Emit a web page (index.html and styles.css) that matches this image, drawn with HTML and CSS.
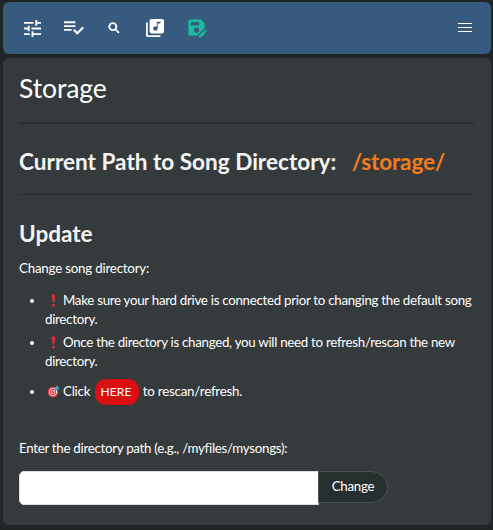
FILE: index.html
```html
<!DOCTYPE html>
<html lang="en">
<head>
<meta charset="utf-8">
<title>Storage</title>
<link rel="stylesheet" href="styles.css">
</head>
<body>
<nav class="bar">
  <svg class="icon tune" viewBox="3 3 18 18"><path d="M3 17v2h6v-2H3zM3 5v2h10V5H3zm10 16v-2h8v-2h-8v-2h-2v6h2zM7 9v2H3v2h4v2h2V9H7zm14 4v-2H11v2h10zm-6-4h2V7h4V5h-4V3h-2v6z"/></svg>
  <svg class="icon queue" viewBox="2 6 20 14"><path d="M14 10H2v2h12v-2zm0-4H2v2h12V6zM2 16h8v-2H2v2zm19.5-4.5L23 13l-6.990 7-4.510-4.500L13 14l3.010 3 5.490-5.500z"/></svg>
  <svg class="icon search" viewBox="0 0 12 12"><circle cx="4.8" cy="4.6" r="3.5"/><path d="M7.300 7.100 11 10.800"/></svg>
  <svg class="icon library" viewBox="2 2 20 20"><path d="M20 2H8c-1.100 0-2 .9-2 2v12c0 1.100.9 2 2 2h12c1.100 0 2-.9 2-2V4c0-1.100-.9-2-2-2zm-2 5h-3v5.500c0 1.380-1.120 2.500-2.500 2.500S10 13.880 10 12.500s1.120-2.500 2.500-2.500c.57 0 1.080.19 1.500.51V5h4v2zM4 6H2v14c0 1.100.9 2 2 2h14v-2H4V6z"/></svg>
  <svg class="icon save" viewBox="0 0 19 19"><path fill-rule="evenodd" d="M2 .5h10.800L16.500 4.200V9L9.300 16.500H2a1.700 1.700 0 0 1-1.700-1.700V2.200A1.700 1.700 0 0 1 2 .5zM2.800 3v3.400h8.400V3zM8.500 8.600a2.600 2.600 0 1 0 0 5.200 2.600 2.600 0 0 0 0-5.200z"/><path d="M11 18.500v-1.900l5-5 1.900 1.900-5 5zM16.600 11l.5-.5q.3-.3.600 0l1.200 1.200q.3.300 0 .6l-.5.500z"/></svg>
  <svg class="menu" viewBox="0 0 14 10"><path d="M0 .5h14M0 4.500h14M0 8.500h14"/></svg>
</nav>
<main class="panel">
  <h1>Storage</h1>
  <hr class="thick">
  <h2 class="current">Current Path to Song Directory: <span class="path">/storage/</span></h2>
  <hr>
  <h2 class="update">Update</h2>
  <p class="intro">Change song directory:</p>
  <ul>
    <li><svg class="emoji" viewBox="0 0 13 13"><path class="red" d="M4.700 1Q6.500-.6 8.300 1L7.300 8.800H5.700z"/><circle class="red" cx="6.500" cy="11.300" r="1.400"/></svg><span>Make sure your hard drive is connected prior to changing the default song directory.</span></li>
    <li><svg class="emoji" viewBox="0 0 13 13"><path class="red" d="M4.700 1Q6.500-.6 8.300 1L7.300 8.800H5.700z"/><circle class="red" cx="6.500" cy="11.300" r="1.400"/></svg><span>Once the directory is changed, you will need to refresh/rescan the new directory.</span></li>
    <li class="rescan"><svg class="emoji" viewBox="0 0 13 13"><circle class="red" cx="6" cy="7" r="5.500"/><circle cx="6" cy="7" r="3.700" fill="none" stroke="#eee"/><circle cx="6" cy="7" r="1.600" fill="none" stroke="#eee" stroke-width=".8"/><path d="M6 7 8.500 4.500" stroke="#42a9e0"/><path d="M7.500 5.500 8.500 2l2-1.700.4 1.900 1.900.4-1.700 2-2.600.9z" fill="#42a9e0"/></svg><span>Click</span> <a class="here">HERE</a> <span>to rescan/refresh.</span></li>
  </ul>
  <label for="dir">Enter the directory path (e.g., /myfiles/mysongs):</label>
  <form class="row"><input id="dir" type="text"><button type="button">Change</button></form>
</main>
</body>
</html>
```
FILE: styles.css
```css
* { box-sizing: border-box; }
body {
  margin: 0;
  padding: 2px 2px 0 3px;
  height: 530px;
  overflow: hidden;
  background: #212525;
  color: #fff;
  font: 13.3px/19px Lato, sans-serif;
  letter-spacing: -0.28px;
}
.bar {
  display: flex;
  align-items: center;
  height: 52px;
  padding: 0 19px 0 21px;
  border-radius: 6px;
  background: #375a7f;
}
.icon { fill: #fff; flex: none; }
.tune { width: 17px; height: 17px; }
.queue { width: 19px; height: 14px; margin-left: 23px; overflow: visible; }
.search { width: 12px; height: 12px; margin-left: 25px; fill: none; stroke: #fff; stroke-width: 1.9; }
.library { width: 18px; height: 18px; margin-left: 26px; }
.save { width: 19px; height: 19px; margin-left: 24px; fill: #1abc9c; }
.menu { width: 14px; height: 10px; margin-left: auto; stroke: #fff; stroke-width: 1; }
.panel {
  height: 467px;
  margin-top: 4px;
  padding: 14px 16px 0;
  border-radius: 6px;
  background: #353b3d;
}
h1 { margin: 0 0 17px; font-size: 26.5px; line-height: 33px; font-weight: 400; letter-spacing: -0.1px; }
h2 { margin: 0; font-size: 22.57px; line-height: 28px; font-weight: 700; letter-spacing: 0; color: #f4f4f4; }
hr { height: 1px; margin: 0; border: 0; background: #282e2f; }
.thick { height: 2px; background: #2b3132; }
.current { margin: 24px 0 18px; white-space: nowrap; }
.path { margin-left: 10px; color: #f47b20; letter-spacing: -0.15px; }
.update { margin-top: 25px; }
.intro { margin: 11px 0 13px; letter-spacing: -0.2px; }
ul { margin: 0; padding: 0 0 0 26px; }
li { margin-bottom: 4px; }
.emoji { width: 13px; height: 13px; margin: 0 3px 0 2px; vertical-align: -2px; }
.red { fill: #dd2e36; }
.rescan { margin-top: 7px; line-height: 26px; letter-spacing: -0.2px; }
.here {
  display: inline-block;
  height: 26px;
  margin: 0 1px;
  padding: 0 7px 0 6px;
  border-radius: 11px;
  background: #d90f12;
  font-size: 12px;
  letter-spacing: 0.1px;
}
label { display: block; margin-top: 34px; }
.row { display: flex; align-items: flex-start; margin: 13px 0 0; }
input {
  width: 300px;
  height: 34px;
  padding: 0 8px;
  border: 1px solid #ddd;
  border-radius: 5px 0 0 5px;
  background: #fff;
}
button {
  width: 70px;
  height: 32px;
  margin-left: -1px;
  padding: 0 0 2px;
  border: 1px solid #4a5254;
  border-radius: 0 16px 16px 0;
  background: #272e2e;
  color: #fff;
  font: 13.3px/19px Lato, sans-serif;
  letter-spacing: -0.25px;
}
```
